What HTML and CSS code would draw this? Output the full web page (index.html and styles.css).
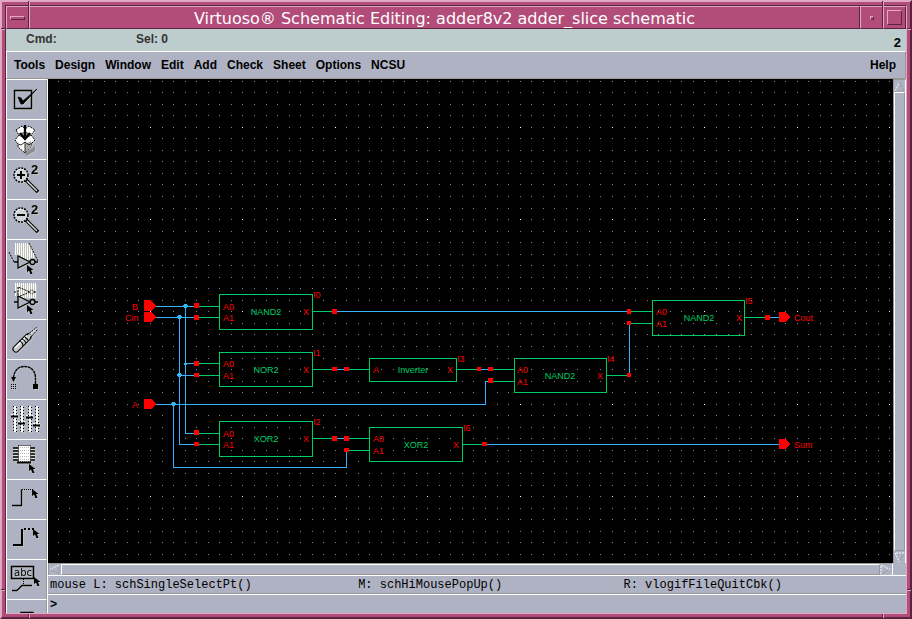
FILE: index.html
```html
<!DOCTYPE html>
<html lang="en">
<head>
<meta charset="utf-8">
<title>Virtuoso Schematic Editing</title>
<link rel="stylesheet" href="styles.css">
</head>
<body>
<div class="window">
  <span class="notch top left"></span><span class="notch top right"></span>
  <span class="notch bottom left"></span><span class="notch bottom right"></span>
  <span class="notch side west high"></span><span class="notch side east high"></span>
  <span class="notch side west low"></span><span class="notch side east low"></span>
  <div class="frame">
    <div class="inner">
      <header class="titlebar">
        <button class="wm" aria-label="Window menu"><span class="wm-menu"></span></button>
        <h1>Virtuoso® Schematic Editing: adder8v2 adder_slice schematic</h1>
        <button class="wm" aria-label="Minimize"><span class="wm-min"></span></button>
        <button class="wm" aria-label="Maximize"><span class="wm-max"></span></button>
      </header>
      <div class="banner">
        <span class="cmd">Cmd:</span><span class="sel">Sel: 0</span><span class="count">2</span>
      </div>
      <nav class="menubar">
        <button>Tools</button><button>Design</button><button>Window</button><button>Edit</button><button>Add</button><button>Check</button><button>Sheet</button><button>Options</button><button>NCSU</button><button class="help">Help</button>
      </nav>
      <div class="workspace">
        <svg class="defs" aria-hidden="true">
          <defs>
            <path id="cursor" d="M0 0V7L2 5.500L3.500 9H5.500L4 5H6.500Z" fill="#000"/>
            <g id="lens"><circle cx="14" cy="15" r="7" fill="#d4d6dc" stroke="#000" stroke-width="1.500" stroke-dasharray="2 1"/><path d="M9 12Q11 9 14 9" fill="none" stroke="#fff"/><path d="M19 20L31 32" stroke="#000" stroke-width="3.500"/><path d="M20 21L30 31" stroke="#ddd" stroke-width="1.500"/><path d="M19 18L22 21" stroke="#000"/></g>
            <path id="gate" d="M7 22H11M11 16V28L23 22ZM28 22H31" fill="none" stroke="#000" stroke-width="1.300"/>
          </defs>
        </svg>
        <div class="toolbar">
          <button aria-label="Check and save"><svg viewBox="0 0 39 39"><path d="M7.500 10.500H24.500V28.500H7.500Z" fill="none" stroke="#000" stroke-width="1.400"/><path d="M11 17L14 18L16 21L30 9L16 24H14Z" fill="#000" stroke="#000" stroke-width=".8"/></svg></button>
          <button aria-label="Save"><svg viewBox="0 0 39 39"><path d="M18 33L28 26V31L19 36Z" fill="#8e8e92"/><path d="M9 10L15 6L18 9L22 6L28 10L24 15L28 20L24 24V27L18 33L11 27V24L8 20L12 15Z" fill="#fff" stroke="#000" stroke-dasharray="2 1"/><path d="M12 15L18 12L24 15L18 19Z" fill="#aaa" stroke="#000" stroke-width=".7"/><path d="M18 24V33L24 27V21Z" fill="#aaa"/><path d="M11 24L14 25L18 22L22 25L25 23M18 22V33" fill="none" stroke="#000" stroke-width=".8"/><path d="M18 5V18M13 13L18 19L23 13" fill="none" stroke="#000" stroke-width="2.300"/></svg></button>
          <button aria-label="Zoom in by 2"><svg viewBox="0 0 39 39"><use href="#lens"/><path d="M10 15H18M14 11V19" stroke="#000" stroke-width="2"/><text x="24" y="14">2</text></svg></button>
          <button aria-label="Zoom out by 2"><svg viewBox="0 0 39 39"><use href="#lens"/><path d="M10 15H18" stroke="#000" stroke-width="2"/><text x="24" y="14">2</text></svg></button>
          <button aria-label="Stretch"><svg viewBox="0 0 39 39"><path d="M8.500 3V15M10.500 3V15M12.500 3V15M14.500 3V17M16.500 3V18M18.500 3V19M20.500 3V20M22.500 3V20M24.500 8V18M26.500 12V18" stroke="#fff"/><path d="M2 12L7 22M22 3L31 21" stroke="#000" stroke-dasharray="2 1"/><use href="#gate"/><circle cx="25.500" cy="22" r="2.500" fill="#aeb2c3" stroke="#000" stroke-width="1.300"/><use href="#cursor" x="20" y="25"/></svg></button>
          <button aria-label="Copy"><svg viewBox="0 0 39 39"><path d="M8.500 3V16M10.500 3V16M12.500 3V16M14.500 3V17M16.500 3V18M18.500 3V18M20.500 3V18M22.500 3V18M24.500 3V18M26.500 3V18M28.500 3V18" stroke="#fff"/><path d="M7 12H11M11 7V17L23 12ZM27 12H30" fill="none" stroke="#000" stroke-dasharray="2 1"/><circle cx="25" cy="12" r="2" fill="none" stroke="#000" stroke-dasharray="1 1"/><use href="#gate"/><circle cx="25.500" cy="22" r="2.500" fill="#aeb2c3" stroke="#000" stroke-width="1.300"/><use href="#cursor" x="20" y="25"/></svg></button>
          <button aria-label="Delete"><svg viewBox="0 0 39 39"><path d="M9 29L21 17" stroke="#000" stroke-width="7" stroke-linecap="round"/><path d="M9 29L21 17" stroke="#c8c8c8" stroke-width="5" stroke-linecap="round"/><path d="M8 28L20 16" stroke="#fff" stroke-width="1.500"/><path d="M12 21Q16 22 16 26M15 19Q18 20 19 23M18 17L21 20" fill="none" stroke="#000" stroke-width="1.200"/><path d="M20 15L30 7M23 18L31 9" stroke="#000" stroke-dasharray="2 1"/><path d="M22 16L29 9" stroke="#ddd" stroke-width="2" stroke-dasharray="2 1"/></svg></button>
          <button aria-label="Undo"><svg viewBox="0 0 39 39"><path d="M28.500 24V17C28 10 23 6.500 17.500 6.500C11 6.500 7 11 6.500 18" fill="none" stroke="#000" stroke-width="1.400" stroke-dasharray="3 .5"/><path d="M4 17H9L6.500 22Z"/><path d="M26 24H31V29H26Z"/><path d="M4 24.500H10M4 26.500H10M4 28.500H10" stroke="#000" stroke-dasharray="1 1"/></svg></button>
          <button aria-label="Edit properties"><svg viewBox="0 0 39 39"><path d="M6.500 6V31M13.500 6V31M21.500 6V31M28.500 6V31M9.500 7V32M16.500 7V32M24.500 7V32M31.500 7V32" stroke="#000" stroke-dasharray="1 2"/><path d="M8 6V32M15 6V32M23 6V32M30 6V32" stroke="#fff" stroke-width="2"/><path d="M4 16.500H11M11 23.500H18M19 17.500H26M26 25.500H33" stroke="#000" stroke-width="2"/><path d="M4 14.500H11M11 21.500H18M19 15.500H26M26 23.500H33" stroke="#fff" stroke-dasharray="2 1"/></svg></button>
          <button aria-label="Instance"><svg viewBox="0 0 39 39"><path d="M6 8H28M6 11H28M6 14H28M6 17H28M6 20H28" stroke="#000" stroke-width="1.500"/><path d="M6 9.500H28M6 12.500H28M6 15.500H28M6 18.500H28" stroke="#ddd"/><path d="M11.500 5.500H23.500V22H11.500Z" fill="#fff" stroke="#000" stroke-dasharray="1 1"/><path d="M13 7.500H23M13 10.500H23M13 13.500H23M13 16.500H23M13 19.500H23" stroke="#b8bac6" stroke-dasharray="1 1"/><path d="M10 22.500H24" stroke="#000" stroke-width="2"/><use href="#cursor" x="22" y="24"/></svg></button>
          <button aria-label="Wire (narrow)"><svg viewBox="0 0 39 39"><path d="M5 25.500H14.500V9.500" fill="none" stroke="#000" stroke-width="1.300"/><path d="M15 9.500H27" stroke="#000" stroke-dasharray="1 1"/><use href="#cursor" x="25" y="9"/></svg></button>
          <button aria-label="Wire (wide)"><svg viewBox="0 0 39 39"><path d="M6 25H15V9" fill="none" stroke="#000" stroke-width="2"/><path d="M17 9H28" stroke="#000" stroke-width="2" stroke-dasharray="2 2"/><use href="#cursor" x="26" y="9"/></svg></button>
          <button aria-label="Wire name"><svg viewBox="0 0 39 39"><path d="M4.500 6.500H26.500V18.500H4.500Z" fill="none" stroke="#000" stroke-width="1.500"/><text class="abc" x="7" y="16">abc</text><path d="M16.500 19V25" stroke="#000" stroke-dasharray="1 1"/><path d="M5 30.500H10L15 25.500H25" fill="none" stroke="#000" stroke-width="1.300"/><use href="#cursor" x="27" y="17"/></svg></button>
          <button aria-label="Pin"><svg viewBox="0 0 39 39"><path d="M14 12.500H26V20H14Z" fill="none" stroke="#000" stroke-width="1.500"/></svg></button>
        </div>
        <main class="main">
          <div class="view">
            <div class="canvas">
              <svg class="sheet" id="sheet" role="img" aria-label="adder_slice schematic">
                <g transform="translate(-48 -79)">
                  <path id="minor" class="minor"/><path id="major" class="major"/>
                  <g class="wire">
                    <path d="M156 306.500H194M185.500 306V433.500H194M185 363.500H194M156 317.500H194M179.500 317V444.500H194M179 375.500H194M156 404.500H485.500V381.500H488M173.500 404V467.500H346.500V452"/>
                    <path d="M337 311.500H627M337 369.500H344M481 369.500H488M337 438.500H344M487 444.500H779M629.500 325V373M770 317.500H779"/>
                  </g>
                  <g class="dot"><path d="M184 304h3v1h1v2h-1v1h-3v-1h-1v-2h1ZM178 315h3v1h1v2h-1v1h-3v-1h-1v-2h1ZM178 373h3v1h1v2h-1v1h-3v-1h-1v-2h1ZM172 402h3v1h1v2h-1v1h-3v-1h-1v-2h1ZM184 363h3v2h-3Z"/></g>
                  <g class="device">
                    <path d="M219.500 294.500H312.500V329.500H219.500ZM219.500 352.500H312.500V386.500H219.500ZM219.500 421.500H312.500V456.500H219.500ZM369.500 358.500H456.500V381.500H369.500ZM369.500 427.500H462.500V461.500H369.500ZM514.500 358.500H606.500V392.500H514.500ZM652.500 300.500H744.500V335.500H652.500Z"/>
                    <path d="M199 306.500H219M199 317.500H219M199 363.500H219M199 375.500H219M199 433.500H219M199 444.500H219M312 311.500H332M312 369.500H332M312 438.500H332M349 369.500H369M349 438.500H369M349 450.500H369M456 369.500H477M493 369.500H514M493 381.500H514M462 444.500H482M606 375.500H627M631 311.500H652M631 323.500H652M744 317.500H765"/>
                  </g>
                  <g class="pin">
                    <path d="M194 303h5v5h-5ZM194 315h5v5h-5ZM194 361h5v5h-5ZM194 373h5v4h-5ZM194 430h5v5h-5ZM194 442h5v4h-5ZM332 309h5v5h-5ZM332 367h5v4h-5ZM344 367h5v4h-5ZM332 436h5v5h-5ZM344 436h5v5h-5ZM344 448h5v4h-5ZM477 367h4v4h-4ZM488 367h5v4h-5ZM488 378h5v5h-5ZM482 442h5v4h-5ZM627 309h4v5h-4ZM627 321h4v4h-4ZM627 373h4v4h-4ZM765 315h5v5h-5Z"/>
                    <path d="M144 300H151L156 306L151 311H144ZM144 312H151L156 317L151 322H144ZM144 399H151L156 404L151 409H144ZM779 312H785L790 317L785 322H779ZM779 439H785L790 444L785 449H779Z"/>
                  </g>
                  <g class="label">
                    <text x="132" y="310">B</text><text x="125" y="321">Cin</text><text x="132" y="408">A</text>
                    <text x="794" y="321">Cout</text><text x="794" y="448">Sum</text>
                    <text x="223" y="310">A0</text><text x="223" y="321">A1</text><text x="303" y="315">X</text><text x="313" y="298">I0</text>
                    <text x="223" y="367">A0</text><text x="223" y="379">A1</text><text x="303" y="373">X</text><text x="313" y="356">I1</text>
                    <text x="223" y="437">A0</text><text x="223" y="448">A1</text><text x="303" y="442">X</text><text x="313" y="425">I2</text>
                    <text x="373" y="373">A</text><text x="447" y="373">X</text><text x="457" y="362">I3</text>
                    <text x="373" y="442">A0</text><text x="373" y="454">A1</text><text x="453" y="448">X</text><text x="463" y="431">I6</text>
                    <text x="517" y="373">A0</text><text x="517" y="385">A1</text><text x="597" y="379">X</text><text x="607" y="362">I4</text>
                    <text x="656" y="315">A0</text><text x="656" y="327">A1</text><text x="736" y="321">X</text><text x="745" y="304">I5</text>
                  </g>
                  <g class="cell">
                    <text x="266" y="315">NAND2</text><text x="266" y="373">NOR2</text><text x="266" y="442">XOR2</text>
                    <text x="413" y="373">Inverter</text><text x="416" y="448">XOR2</text><text x="560" y="379">NAND2</text><text x="699" y="321">NAND2</text>
                  </g>
                </g>
              </svg>
            </div>
            <div class="vscroll">
              <button aria-label="Scroll up"><svg viewBox="0 0 11 11"><path d="M1 10L5.500 1" class="lit"/><path d="M5.500 1L10 10H1" class="dim"/></svg></button>
              <div class="thumb"></div>
              <button aria-label="Scroll down"><svg viewBox="0 0 11 11"><path d="M10 1L5.500 10" class="dim"/><path d="M10 1H1L5.500 10" class="lit"/></svg></button>
            </div>
            <div class="hscroll">
              <button aria-label="Scroll left"><svg viewBox="0 0 11 11"><path d="M1 5.500L10 10V1" class="dim"/><path d="M10 1L1 5.500" class="lit"/></svg></button>
              <div class="thumb"></div>
              <button aria-label="Scroll right"><svg viewBox="0 0 11 11"><path d="M1 10L10 5.500" class="dim"/><path d="M1 10V1L10 5.500" class="lit"/></svg></button>
            </div>
          </div>
          <div class="status"><span>mouse L: schSingleSelectPt()</span><span>M: schHiMousePopUp()</span><span>R: vlogifFileQuitCbk()</span></div>
          <div class="prompt"><label for="command">&gt;</label><input id="command" type="text" autocomplete="off"></div>
        </main>
      </div>
    </div>
  </div>
</div>
<script src="grid.js"></script>
</body>
</html>
```
FILE: styles.css
```css
:root {
  --frame: #b24d7a;
  --frame-lit: #dfa9c4;
  --frame-dim: #5a2340;
  --panel: #aeb2c3;
  --panel-dim: #969696;
  --ui: "Liberation Sans", Arial, sans-serif;
  --mono: "Liberation Mono", "Courier New", monospace;
}
* { box-sizing: border-box; }
body { margin: 0; }
button {
  margin: 0;
  padding: 0;
  border: 0;
  background: none;
  color: inherit;
  font: inherit;
}

.window {
  position: relative;
  display: flex;
  height: 100vh;
  border: 2px solid;
  border-color: var(--frame-lit) var(--frame-dim) var(--frame-dim) var(--frame-lit);
}
.frame { flex: 1; display: flex; min-width: 0; border: 3px solid var(--frame); }
.inner {
  flex: 1;
  display: flex;
  flex-direction: column;
  min-width: 0;
  border: 1px solid;
  border-color: var(--frame-dim) var(--frame-lit) var(--frame-lit) var(--frame-dim);
}

/* Resize-corner grooves in the window frame */
.notch {
  position: absolute;
  width: 2px;
  height: 4px;
  border-left: 1px solid var(--frame-dim);
  border-right: 1px solid var(--frame-lit);
}
.notch.top { top: -1px; height: 6px; }
.notch.bottom { bottom: -1px; }
.notch.left { left: 26px; }
.notch.right { right: 26px; }
.notch.side {
  width: 4px;
  height: 2px;
  border: 0;
  border-top: 1px solid var(--frame-dim);
  border-bottom: 1px solid var(--frame-lit);
}
.notch.west { left: -1px; }
.notch.east { right: -1px; }
.notch.high { top: 26px; }
.notch.low { bottom: 26px; }

.titlebar { display: flex; height: 23px; background: var(--frame); color: #fff; }
.titlebar h1,
.wm,
.wm span {
  border: 1px solid;
  border-color: var(--frame-lit) var(--frame-dim) var(--frame-dim) var(--frame-lit);
}
.titlebar h1 {
  flex: 1;
  margin: 0;
  overflow: hidden;
  font: 16px/23px "DejaVu Sans", sans-serif;
  text-align: center;
  white-space: nowrap;
}
.wm { display: flex; align-items: center; justify-content: center; width: 23px; }
.wm-menu { width: 15px; height: 4px; }
.wm-min { width: 4px; height: 4px; }
.wm-max { width: 15px; height: 15px; }

.banner {
  display: flex;
  height: 22px;
  padding: 0 5px 0 20px;
  background: #bdcccc;
  color: #333;
  font: bold 12px/20px var(--ui);
}
.cmd { width: 110px; }
.count { margin-left: auto; color: #000; font-size: 13px; line-height: 27px; }

.menubar {
  display: flex;
  gap: 10px;
  height: 28px;
  padding: 0 9px 0 7px;
  border: 1px solid;
  border-color: #fff var(--panel-dim) var(--panel-dim) #fff;
  background: var(--panel);
  font: bold 12px/26px var(--ui);
}
.help { margin-left: auto; }

.workspace {
  flex: 1;
  display: flex;
  min-height: 0;
  border-left: 1px solid #fff;
  background: var(--panel);
}
.defs { position: absolute; width: 0; height: 0; }
.toolbar {
  display: flex;
  flex-direction: column;
  width: 41px;
  overflow: hidden;
  border-right: 1px solid #fff;
}
.toolbar button {
  flex: 0 0 40px;
  border-top: 1px solid #fff;
  border-right: 1px solid var(--panel-dim);
}
.toolbar svg { display: block; width: 39px; height: 39px; filter: drop-shadow(1px 1px 0 #c2c2bc); }
.toolbar text { font: bold 13px var(--ui); }
.toolbar .abc { font: 10px "DejaVu Sans", sans-serif; }

.main { flex: 1; display: flex; flex-direction: column; min-width: 0; }
.view {
  flex: 1;
  display: grid;
  grid-template: minmax(0, 1fr) 12px / minmax(0, 1fr) 13px;
  min-height: 0;
}
.canvas { position: relative; overflow: hidden; background: #000; }
.sheet { position: absolute; width: 100%; height: 100%; }
.vscroll, .hscroll {
  display: flex;
  border: solid var(--panel-dim);
  border-width: 1px 1px 0 1px;
  border-right-color: #fff;
}
.vscroll { flex-direction: column; }
.thumb {
  flex: 1;
  border: 1px solid;
  border-color: #fff var(--panel-dim) var(--panel-dim) #fff;
}
.vscroll button, .hscroll button { flex: 0 0 12px; }
.vscroll svg, .hscroll svg { display: block; width: 11px; height: 11px; }
.lit, .dim { fill: none; stroke: #fff; stroke-dasharray: 2 1; }
.dim { stroke: var(--panel-dim); }

.status, .prompt {
  color: #000;
  font: 12px/18px var(--mono);
  border-top: 1px solid #fff;
}
.status {
  display: grid;
  grid-template-columns: 36fr 31fr 33fr;
  height: 19px;
  padding-left: 2px;
  border-bottom: 1px solid var(--panel-dim);
  white-space: nowrap;
}
.prompt { display: flex; height: 19px; padding-left: 2px; font-weight: bold; line-height: 21px; }
.prompt input { flex: 1; min-width: 0; padding: 0 4px; border: 0; outline: 0; background: none; font: inherit; }

.sheet path { shape-rendering: crispEdges; }
.minor { fill: #8585a0; }
.major { fill: #fff; }
.wire { fill: none; stroke: #33b5ff; }
.dot { fill: #33b5ff; }
.device { fill: none; stroke: #00cc66; }
.pin { fill: #f00; }
.label { fill: #f00; font: 9px var(--ui); }
.cell { fill: #00cc66; font: 9px var(--ui); text-anchor: middle; }
```
FILE: grid.js
```js
// Draws the snap grid: a dot per step, every eighth one in both directions bright.
const sheet = document.getElementById("sheet");

function drawGrid() {
  const box = sheet.getBoundingClientRect();
  const minor = [];
  const major = [];
  for (let row = -20; ; row++) {
    const y = Math.round(311.4 + row * 11.54);
    if (y >= 79 + box.height) break;
    for (let col = -16; ; col++) {
      const x = Math.round(242.4 + col * 11.55);
      if (x >= 48 + box.width) break;
      (row % 8 === 0 && col % 8 === 0 ? major : minor).push(`M${x} ${y}h1v1h-1Z`);
    }
  }
  document.getElementById("minor").setAttribute("d", minor.join(""));
  document.getElementById("major").setAttribute("d", major.join(""));
}

drawGrid();
window.addEventListener("resize", drawGrid);
```
